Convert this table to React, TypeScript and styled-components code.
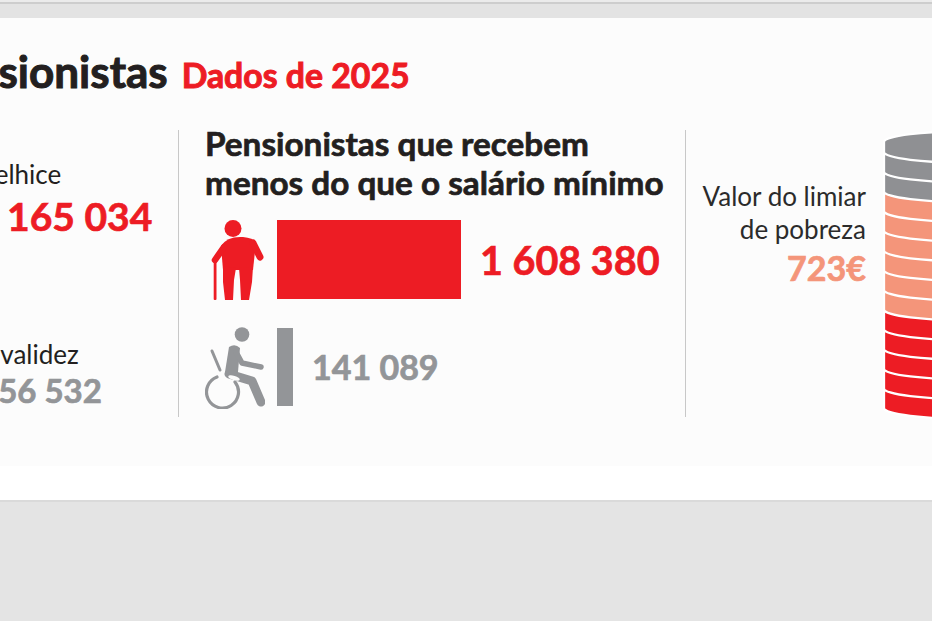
import React from "react";
import styled, { createGlobalStyle, css } from "styled-components";

const RED = "#ed1c24";
const DARK = "#231f20";
const GREY = "#939598";
const SALMON = "#f4957a";

const GlobalStyle = createGlobalStyle`
  html, body { margin: 0; padding: 0; background: #e4e4e4; overflow: hidden; }
  body { font-family: Lato, "Open Sans", sans-serif; }
`;

const heavy = css`
  font-weight: 700;
  -webkit-text-stroke: 0.7px currentColor;
`;

const Page = styled.div`
  width: 932px;
  height: 621px;
  overflow: hidden;
  background: #e4e4e4;
  display: flex;
  flex-direction: column;
`;

const TopBar = styled.div`
  flex: none;
  height: 18px;
  background: #e3e3e3;
  box-shadow: inset 0 2px 0 #ebebeb, inset 0 4px 0 #cdcdcd;
`;

const Panel = styled.div`
  flex: none;
  height: 484px;
  background: #ffffff;
  padding-bottom: 34px;
  box-sizing: border-box;
  border-bottom: 2px solid #dadada;
  overflow: hidden;
`;

const Graphic = styled.div`
  height: 100%;
  margin-left: -76px;
  padding-top: 27px;
  box-sizing: border-box;
  background: #fcfcfc;
`;

const Title = styled.h1`
  margin: 0;
  font-size: 44px;
  line-height: 1.2;
  ${heavy};
  -webkit-text-stroke: 1px currentColor;
  color: ${DARK};
  white-space: nowrap;
`;

const TitleSub = styled.span`
  margin-left: 14px;
  font-size: 33.8px;
  color: ${RED};
`;

const Columns = styled.div`
  margin-top: 28px;
  padding-left: 55px;
  display: grid;
  grid-template-columns: 199px 1px 506px 1px 1fr;
  align-items: start;
`;

const Divider = styled.div`
  margin-top: 4px;
  width: 1px;
  height: 287px;
  background: #c8c8c8;
`;

const LeftCol = styled.div`
  padding-top: 33px;
  display: flex;
  flex-direction: column;
`;

const Stat = styled.div<{ $gap: number }>`
  margin-top: ${(p) => p.$gap}px;
  display: flex;
  flex-direction: column;
`;

const Label = styled.div`
  font-size: 26px;
  line-height: 1.2;
  font-weight: 400;
  color: ${DARK};
  white-space: nowrap;
`;

const BigNumber = styled.div<{ $color: string; $size: number; $gap?: number; $shift?: number }>`
  margin-top: ${(p) => p.$gap ?? 0}px;
  margin-left: ${(p) => p.$shift ?? 0}px;
  font-size: ${(p) => p.$size}px;
  line-height: 1.2;
  ${heavy};
  color: ${(p) => p.$color};
  white-space: nowrap;
`;

const MiddleCol = styled.div`
  padding-left: 26px;
  display: flex;
  flex-direction: column;
`;

const Heading = styled.h2`
  margin: -2px 0 0;
  font-size: 33.3px;
  line-height: 39px;
  ${heavy};
  color: ${DARK};
  white-space: nowrap;
`;

const BarRow = styled.div<{ $gap: number }>`
  margin-top: ${(p) => p.$gap}px;
  display: flex;
  align-items: center;
`;

const IconBox = styled.div`
  flex: none;
  width: 60px;
  height: 83px;
  margin-right: 12px;
  display: flex;
`;

const Bar = styled.div<{ $w: number; $h: number; $color: string }>`
  flex: none;
  width: ${(p) => p.$w}px;
  height: ${(p) => p.$h}px;
  background: ${(p) => p.$color};
  margin-right: 19px;
`;

const RightCol = styled.div`
  display: flex;
  align-items: flex-start;
  gap: 17px;
`;

const Threshold = styled.div`
  flex: none;
  width: 180px;
  padding-top: 54px;
  text-align: right;
`;

const ThresholdText = styled.div`
  font-size: 26px;
  line-height: 33px;
  color: #2b2b2b;
  white-space: nowrap;
`;

const CoinSvg = styled.svg`
  flex: none;
  margin-top: 4px;
  display: block;
`;

function ElderIcon() {
  return (
    <svg width="60" height="83" viewBox="0 0 60 83" fill={RED}>
      <circle cx="28" cy="10.5" r="8.5" />
      <path d="M16 28 Q22 18 38 19 Q48 20 51 24 L48 52 L18 52 Z" />
      <line x1="48" y1="25" x2="55" y2="39" stroke={RED} strokeWidth="7" strokeLinecap="round" />
      <line x1="19" y1="29" x2="10" y2="42" stroke={RED} strokeWidth="6.5" strokeLinecap="round" />
      <path d="M18 48 L31 50 L29 62 L28 82 L20 82 L18 64 Z" />
      <path d="M34 50 L48 49 L47 64 L44 82 L36 82 L35 62 Z" />
      <rect x="8.7" y="40" width="2.8" height="42" rx="1" />
    </svg>
  );
}

function WheelchairIcon() {
  return (
    <svg width="60" height="83" viewBox="0 0 60 83" fill="none" stroke={GREY} strokeLinecap="round" strokeLinejoin="round">
      <circle cx="37" cy="8.5" r="7.3" fill={GREY} stroke="none" />
      <path d="M24 21 Q30 17 35 22 L33 46 L20 46 Z" fill={GREY} stroke="none" />
      <polyline points="31,26 37,37 56,41" strokeWidth="5.5" />
      <polyline points="24,48 47,55 56,76" strokeWidth="9" />
      <path d="M 30 56 A 16 16 0 1 1 12 51" strokeWidth="3.2" />
      <line x1="7" y1="25" x2="15" y2="44" strokeWidth="3" />
      <ellipse cx="29" cy="52" rx="6" ry="2.2" fill="#fcfcfc" stroke="none" transform="rotate(18 29 52)" />
    </svg>
  );
}

const COIN_COLORS = [
  "#8f9093", "#8f9093", "#8f9093",
  SALMON, SALMON, SALMON, SALMON, SALMON, SALMON,
  RED, RED, RED, RED, RED,
];

function CoinStack() {
  const rx = 90;
  const ry = 11;
  const cx = 90;
  const step = 19.7;
  const b0 = 22;
  const coins = COIN_COLORS.map((color, i) => {
    const top = i === 0 ? 12 : b0 + step * (i - 1);
    const bottom = b0 + step * i;
    const d = `M ${cx - rx} ${top} A ${rx} ${ry} 0 0 1 ${cx + rx} ${top} L ${cx + rx} ${bottom} A ${rx} ${ry} 0 0 1 ${cx - rx} ${bottom} Z`;
    return { d, color, i };
  });
  return (
    <CoinSvg width="190" height="292" viewBox="-1 0 190 292">
      {coins
        .slice()
        .reverse()
        .map((c) => (
          <path key={c.i} d={c.d} fill={c.color} stroke="#ffffff" strokeWidth="2.3" />
        ))}
    </CoinSvg>
  );
}

export default function App() {
  return (
    <Page>
      <GlobalStyle />
      <TopBar />
      <Panel>
        <Graphic>
          <Title>
            Pensionistas<TitleSub>Dados de 2025</TitleSub>
          </Title>
          <Columns>
            <LeftCol>
              <Stat $gap={0}>
                <Label>Velhice</Label>
                <BigNumber $color={RED} $size={39} $gap={3} $shift={-4}>2 165 034</BigNumber>
              </Stat>
              <Stat $gap={99}>
                <Label>Invalidez</Label>
                <BigNumber $color={GREY} $size={33} $gap={1} $shift={0}>156 532</BigNumber>
              </Stat>
            </LeftCol>
            <Divider />
            <MiddleCol>
              <Heading>
                Pensionistas que recebem
                <br />
                menos do que o salário mínimo
              </Heading>
              <BarRow $gap={16}>
                <IconBox>
                  <ElderIcon />
                </IconBox>
                <Bar $w={184} $h={79} $color={RED} />
                <BigNumber $color={RED} $size={39.5}>1 608 380</BigNumber>
              </BarRow>
              <BarRow $gap={25}>
                <IconBox>
                  <WheelchairIcon />
                </IconBox>
                <Bar $w={16} $h={78} $color={GREY} />
                <BigNumber $color={GREY} $size={34}>141 089</BigNumber>
              </BarRow>
            </MiddleCol>
            <Divider />
            <RightCol>
              <Threshold>
                <ThresholdText>
                  Valor do limiar
                  <br />
                  de pobreza
                </ThresholdText>
                <BigNumber $color={SALMON} $size={34} $gap={2}>723€</BigNumber>
              </Threshold>
              <CoinStack />
            </RightCol>
          </Columns>
        </Graphic>
      </Panel>
    </Page>
  );
}
